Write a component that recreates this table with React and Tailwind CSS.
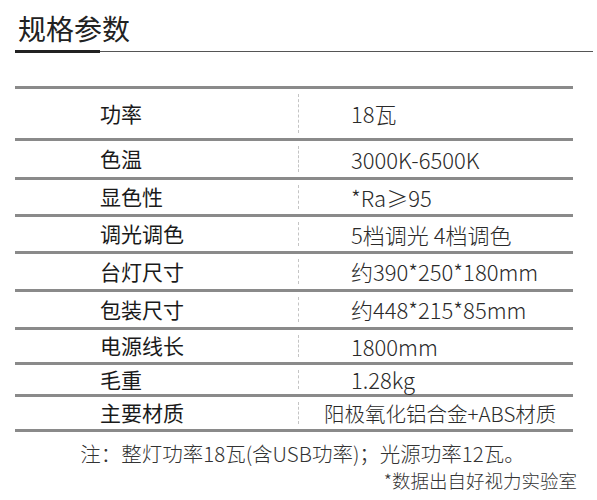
const specs = [
  { label: "功率", value: "18瓦", h: "h-[52px]" },
  { label: "色温", value: "3000K-6500K", h: "h-[39px]" },
  { label: "显色性", value: "*Ra≥95", h: "h-[37px]" },
  { label: "调光调色", value: "5档调光 4档调色", h: "h-[37px]" },
  { label: "台灯尺寸", value: "约390*250*180mm", h: "h-[38px]" },
  { label: "包装尺寸", value: "约448*215*85mm", h: "h-[38px]" },
  { label: "电源线长", value: "1800mm", h: "h-[35px]" },
  { label: "毛重", value: "1.28kg", h: "h-[32px]" },
  { label: "主要材质", value: "阳极氧化铝合金+ABS材质", h: "h-[35px]", wide: true },
];

const App = () => {
  return (
    <div
      className="w-[597px] h-[500px] bg-white overflow-hidden"
      style={{ fontFamily: '"Noto Sans CJK SC", "Noto Sans", sans-serif' }}
    >
      {/* header */}
      <div className="pt-[10px] pl-[18px]">
        <h2 className="text-[28px] leading-[36px] text-[#222] font-normal">规格参数</h2>
      </div>
      <div className="relative mt-[4px] ml-[15px] mr-[4px] h-[3px]">
        <div className="absolute left-0 right-0 top-[1px] h-px bg-[#555]" />
        <div className="absolute left-0 top-0 w-[85px] h-[3px] bg-[#222]" />
      </div>

      {/* spec table */}
      <div className="mt-[33px] ml-[15px] w-[558px] border-t-[3px] border-[#8a8a8a]">
        {specs.map((s) => (
          <div
            key={s.label}
            className={`flex ${s.h} border-b-[3px] border-[#8a8a8a]`}
          >
            <div className="w-[283px] flex items-center pl-[85px] text-[21px] text-[#1a1a1a]">
              {s.label}
            </div>
            <div className="my-[5px] border-l border-dashed border-[#c4c4c4]" />
            <div
              className={`flex-1 flex items-center text-[#2a2a2a] font-light ${
                s.wide ? "pl-[25px] text-[20.5px]" : "pl-[52px] text-[22px]"
              }`}
            >
              {s.value}
            </div>
          </div>
        ))}
      </div>

      {/* notes */}
      <div className="mt-[8px] text-center text-[20.5px] leading-[26px] text-[#333] font-light pl-[8px]">
        注：整灯功率18瓦(含USB功率)；光源功率12瓦。
      </div>
      <div className="mt-[2px] text-right pr-[20px] text-[18.5px] leading-[24px] text-[#333] font-light">
        *数据出自好视力实验室
      </div>
    </div>
  );
};

export default App;
